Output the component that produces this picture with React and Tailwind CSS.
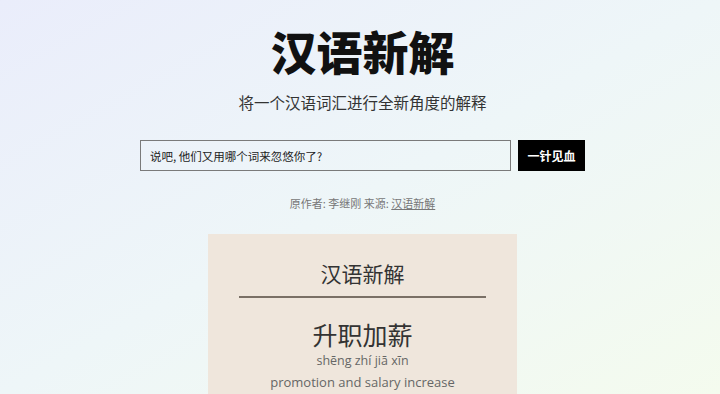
import React from "react";

export default function App() {
  return (
    <div
      className="w-[720px] h-[394px] overflow-hidden bg-gradient-to-br from-[#eaedfb] via-[#eef6f8] to-[#f4fbee] flex flex-col items-center pl-[5px]"
      style={{ fontFamily: '"Noto Sans CJK SC", "Noto Sans", sans-serif' }}
    >
      <h1 className="mt-[21px] text-[46px] leading-[58px] font-black text-[#111]">
        汉语新解
      </h1>
      <p className="mt-[12px] text-[15.5px] leading-[22px] text-[#333]">
        将一个汉语词汇进行全新角度的解释
      </p>
      <div className="mt-[27px] flex gap-[7px] items-stretch">
        <input
          className="w-[371px] h-[31px] border border-[#7a7a7a] bg-transparent px-[9px] text-[11.5px] text-[#222] placeholder:text-[#222] outline-none"
          placeholder="说吧, 他们又用哪个词来忽悠你了?"
        />
        <button className="w-[67px] h-[31px] bg-black text-white text-[12px] font-bold">
          一针见血
        </button>
      </div>
      <p className="mt-[24px] text-[11px] leading-[16px] text-[#777]">
        原作者: 李继刚 来源: <span className="underline">汉语新解</span>
      </p>
      <div className="mt-[23px] w-[309px] flex-1 bg-[#efe6dc] flex flex-col items-center">
        <div className="mt-[24px] text-[21px] leading-[30px] text-[#333]">汉语新解</div>
        <div className="mt-[8px] w-[247px] h-[2px] bg-[#7a7066]" />
        <div className="mt-[21px] text-[25px] leading-[30px] text-[#333]">升职加薪</div>
        <div
          className="mt-[3px] text-[12.5px] leading-[17px] text-[#666]"
          style={{ fontFamily: '"Open Sans", sans-serif' }}
        >
          shēng zhí jiā xīn
        </div>
        <div
          className="mt-[4px] text-[13px] leading-[18px] text-[#666]"
          style={{ fontFamily: '"Open Sans", sans-serif' }}
        >
          promotion and salary increase
        </div>
      </div>
    </div>
  );
}
